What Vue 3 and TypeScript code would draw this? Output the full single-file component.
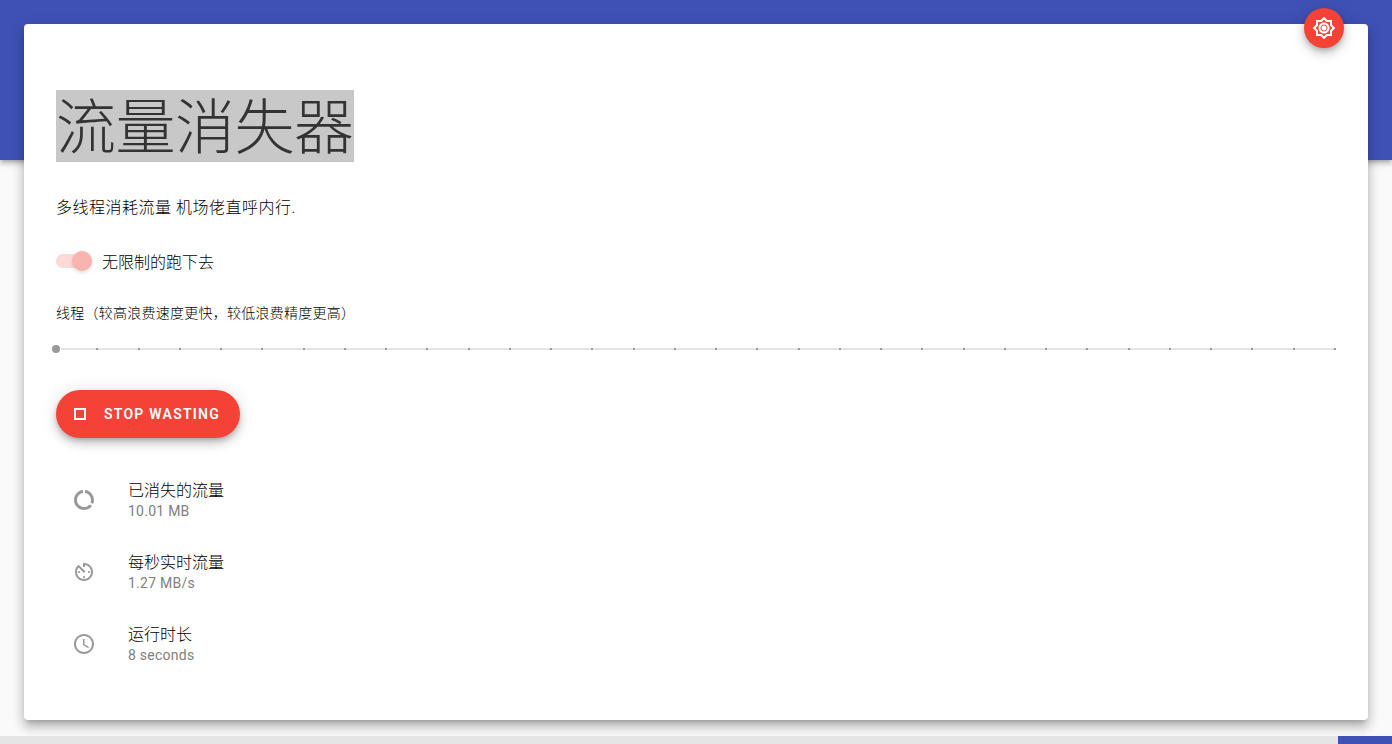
<script setup lang="ts">
import { ref } from 'vue'

interface Stat {
  title: string
  value: string
  path: string
}

const unlimited = ref(true)
const threads = ref(1)
const maxThreads = 32

const stats: Stat[] = [
  {
    title: '已消失的流量',
    value: '10.01 MB',
    path: 'M13 2.05v3.03c3.39.49 6 3.39 6 6.92 0 .9-.18 1.75-.48 2.54l2.6 1.53c.56-1.24.88-2.62.88-4.07 0-5.18-3.95-9.45-9-9.95zM12 19c-3.87 0-7-3.13-7-7 0-3.53 2.61-6.43 6-6.92V2.05c-5.06.5-9 4.76-9 9.95 0 5.52 4.47 10 9.99 10 3.31 0 6.24-1.61 8.06-4.09l-2.6-1.53C16.17 17.98 14.21 19 12 19z',
  },
  {
    title: '每秒实时流量',
    value: '1.27 MB/s',
    path: 'M11 17c0 .55.45 1 1 1s1-.45 1-1-.45-1-1-1-1 .45-1 1zm0-14v4h2V5.08c3.39.49 6 3.39 6 6.92 0 3.87-3.13 7-7 7s-7-3.13-7-7c0-1.68.59-3.22 1.58-4.42L12 13l1.41-1.41-6.8-6.8v.02C4.42 6.45 3 9.05 3 12c0 4.97 4.02 9 9 9 4.97 0 9-4.03 9-9s-4.03-9-9-9h-1zm7 9c0-.55-.45-1-1-1s-1 .45-1 1 .45 1 1 1 1-.45 1-1zM6 12c0 .55.45 1 1 1s1-.45 1-1-.45-1-1-1-1 .45-1 1z',
  },
  {
    title: '运行时长',
    value: '8 seconds',
    path: 'M11.99 2C6.47 2 2 6.48 2 12s4.47 10 9.99 10C17.52 22 22 17.52 22 12S17.52 2 11.99 2zM12 20c-4.42 0-8-3.58-8-8s3.58-8 8-8 8 3.58 8 8-3.58 8-8 8zm.5-13H11v6l5.25 3.15.75-1.23-4.5-2.67z',
  },
]
</script>

<template>
  <div class="app">
    <div class="banner"></div>
    <main class="card">
      <button class="theme" type="button" aria-label="切换主题">
        <svg viewBox="0 0 24 24" width="24" height="24" fill="currentColor" aria-hidden="true">
          <path d="M20 8.69V4h-4.69L12 .69 8.69 4H4v4.69L.69 12 4 15.31V20h4.69L12 23.31 15.31 20H20v-4.69L23.31 12 20 8.69zm-2 5.79V18h-3.52L12 20.48 9.52 18H6v-3.52L3.52 12 6 9.52V6h3.52L12 3.52 14.48 6H18v3.52L20.48 12 18 14.48zM12 6.5c-3.03 0-5.5 2.47-5.5 5.5s2.47 5.5 5.5 5.5 5.5-2.47 5.5-5.5-2.47-5.5-5.5-5.5zm0 9c-1.93 0-3.5-1.57-3.5-3.5s1.57-3.5 3.5-3.5 3.5 1.57 3.5 3.5-1.57 3.5-3.5 3.5z" />
          <circle cx="12" cy="12" r="2.5" />
        </svg>
      </button>

      <h1 class="title"><span class="selected">流量消失器</span></h1>
      <p class="intro">多线程消耗流量 机场佬直呼内行.</p>

      <div class="switch-row">
        <input id="unlimited" v-model="unlimited" class="switch" type="checkbox" role="switch" disabled />
        <label for="unlimited">无限制的跑下去</label>
      </div>

      <label class="slider-label" for="threads">线程（较高浪费速度更快，较低浪费精度更高）</label>
      <div class="slider">
        <div class="ticks" aria-hidden="true">
          <i v-for="n in maxThreads" :key="n"></i>
        </div>
        <input id="threads" v-model.number="threads" type="range" min="1" :max="maxThreads" disabled />
      </div>

      <button class="stop" type="button">
        <svg viewBox="0 0 24 24" width="24" height="24" fill="currentColor" aria-hidden="true">
          <path d="M16 8v8H8V8h8m2-2H6v12h12V6z" />
        </svg>
        <span>STOP WASTING</span>
      </button>

      <ul class="stats">
        <li v-for="s in stats" :key="s.title">
          <svg viewBox="0 0 24 24" width="24" height="24" fill="currentColor" aria-hidden="true">
            <path :d="s.path" />
          </svg>
          <div class="stat-text">
            <div class="stat-title">{{ s.title }}</div>
            <div class="stat-value">{{ s.value }}</div>
          </div>
        </li>
      </ul>
    </main>
    <div class="progress" role="progressbar" aria-label="进度"><span></span></div>
  </div>
</template>

<style>
body {
  margin: 0;
  background: #fafafa;
}
</style>

<style scoped>
.app {
  position: relative;
  box-sizing: border-box;
  min-height: 100vh;
  padding: 24px;
  overflow: hidden;
  background: #fafafa;
  color: #000;
  font-family: Roboto, "Noto Sans CJK SC", sans-serif;
  font-size: 16px;
  font-weight: 300;
  line-height: 24px;
}
.banner {
  position: absolute;
  inset: 0 0 auto;
  height: 160px;
  background: #3f51b5;
  box-shadow: 0 2px 4px -1px rgba(0, 0, 0, 0.2), 0 4px 5px rgba(0, 0, 0, 0.14), 0 1px 10px rgba(0, 0, 0, 0.12);
}
.card {
  position: relative;
  padding: 66px 32px 32px;
  border-radius: 4px;
  background: #fff;
  box-shadow: 0 5px 5px -3px rgba(0, 0, 0, 0.2), 0 8px 10px 1px rgba(0, 0, 0, 0.14), 0 3px 14px 2px rgba(0, 0, 0, 0.12);
}
button {
  display: flex;
  align-items: center;
  justify-content: center;
  border: 0;
  background: #f44336;
  color: #fff;
  font-family: inherit;
  cursor: pointer;
  box-shadow: 0 3px 5px -1px rgba(0, 0, 0, 0.2), 0 6px 10px rgba(0, 0, 0, 0.14), 0 1px 18px rgba(0, 0, 0, 0.12);
}
.theme {
  position: absolute;
  top: -16px;
  right: 24px;
  width: 40px;
  height: 40px;
  padding: 0;
  border-radius: 50%;
}
.title {
  display: flex;
  margin: 0;
  font-size: 60px;
  font-weight: 300;
  line-height: 66px;
  letter-spacing: -0.5px;
}
.selected {
  padding-top: 6px;
  background: #c8c8c8;
  color: #333;
}
.intro {
  margin: 34px 0 0;
  letter-spacing: 0.5px;
}
.switch-row {
  display: flex;
  align-items: center;
  gap: 10px;
  margin-top: 27px;
}
.switch-row label {
  padding-top: 4px;
}
.switch {
  appearance: none;
  position: relative;
  width: 36px;
  height: 14px;
  margin: 0;
  border-radius: 7px;
  background: #fdd9d7;
}
.switch::before {
  content: "";
  position: absolute;
  top: -3px;
  left: 0;
  width: 20px;
  height: 20px;
  border-radius: 50%;
  background: #fab4af;
  box-shadow: 0 2px 4px -1px rgba(0, 0, 0, 0.12), 0 1px 5px rgba(0, 0, 0, 0.06);
}
.switch:checked::before {
  left: 16px;
}
.slider-label {
  display: block;
  margin-top: 26px;
  font-size: 14px;
  letter-spacing: 0.25px;
}
.slider {
  position: relative;
  height: 32px;
  margin-top: 8px;
}
.slider::before {
  content: "";
  position: absolute;
  inset: 15px 0 auto 5px;
  height: 2px;
  background: #e4e4e4;
}
.ticks {
  position: absolute;
  inset: 15px 0 auto -1px;
  display: flex;
  justify-content: space-between;
}
.ticks i {
  width: 2px;
  height: 2px;
  background: #999;
}
.ticks i:first-child {
  background: transparent;
}
.slider input {
  appearance: none;
  position: absolute;
  inset: 0 -4px;
  width: calc(100% + 8px);
  height: 32px;
  margin: 0;
  background: transparent;
}
.slider input::-webkit-slider-thumb {
  appearance: none;
  width: 8px;
  height: 8px;
  border-radius: 50%;
  background: #999;
}
.stop {
  height: 48px;
  margin-top: 25px;
  padding: 0 20px 0 12px;
  gap: 12px;
  border-radius: 24px;
  font-size: 14px;
  font-weight: 600;
  letter-spacing: 1.25px;
}
.stats {
  margin: 18px 0 0;
  padding: 8px 0;
  list-style: none;
}
.stats li {
  display: flex;
  align-items: center;
  gap: 32px;
  height: 72px;
  padding: 0 16px;
}
.stats svg {
  color: #999;
}
.stat-text {
  padding-top: 2px;
}
.stat-title {
  line-height: 20px;
  color: #000;
}
.stat-value {
  font-size: 14px;
  font-weight: 400;
  line-height: 20px;
  letter-spacing: 0.25px;
  color: #808080;
}
.progress {
  position: fixed;
  inset: auto 0 0;
  height: 8px;
  background: #e5e5e5;
}
.progress span {
  display: block;
  width: 54px;
  height: 8px;
  margin-left: auto;
  background: #3f51b5;
}
</style>
